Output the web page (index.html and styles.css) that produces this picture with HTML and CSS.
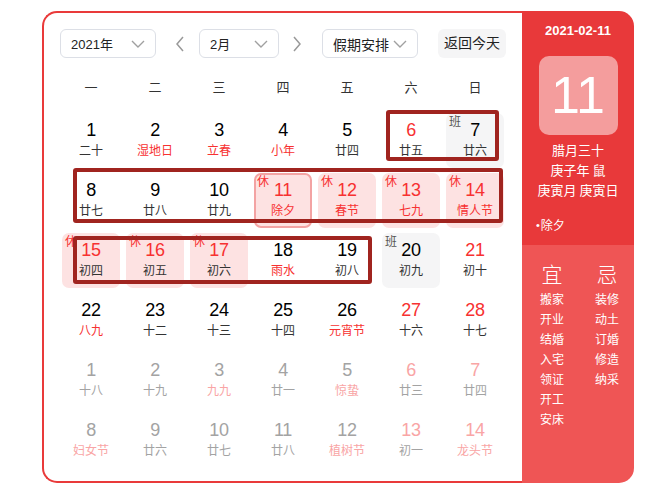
FILE: index.html
```html
<!DOCTYPE html>
<html lang="zh">
<head>
<meta charset="utf-8">
<link rel="stylesheet" href="styles.css">
</head>
<body>
<div class="cal">
  <div class="main">
    <div class="controls">
      <div class="select sel-year"><span>2021年</span><svg class="chev" viewBox="0 0 14 8"><path d="M1 1l6 6 6-6" fill="none" stroke="#a0a0a0" stroke-width="1.4"/></svg></div>
      <span class="arrow prev"><svg viewBox="0 0 8 16"><path d="M7 1L1 8l6 7" fill="none" stroke="#999" stroke-width="1.5"/></svg></span>
      <div class="select sel-month"><span>2月</span><svg class="chev" viewBox="0 0 14 8"><path d="M1 1l6 6 6-6" fill="none" stroke="#a0a0a0" stroke-width="1.4"/></svg></div>
      <span class="arrow next"><svg viewBox="0 0 8 16"><path d="M1 1l6 7-6 7" fill="none" stroke="#999" stroke-width="1.5"/></svg></span>
      <div class="select sel-hol"><span>假期安排</span><svg class="chev" viewBox="0 0 14 8"><path d="M1 1l6 6 6-6" fill="none" stroke="#a0a0a0" stroke-width="1.4"/></svg></div>
      <div class="today">返回今天</div>
    </div>
    <div class="weekdays">
      <span>一</span><span>二</span><span>三</span><span>四</span><span>五</span><span>六</span><span>日</span>
    </div>
    <div class="grid">
      <div class="cell"><span class="num">1</span><span class="lun">二十</span></div>
      <div class="cell"><span class="num">2</span><span class="lun red">湿地日</span></div>
      <div class="cell"><span class="num">3</span><span class="lun red">立春</span></div>
      <div class="cell"><span class="num">4</span><span class="lun red">小年</span></div>
      <div class="cell"><span class="num">5</span><span class="lun">廿四</span></div>
      <div class="cell"><span class="num red">6</span><span class="lun">廿五</span></div>
      <div class="cell work"><span class="tag">班</span><span class="num">7</span><span class="lun">廿六</span></div>

      <div class="cell"><span class="num">8</span><span class="lun">廿七</span></div>
      <div class="cell"><span class="num">9</span><span class="lun">廿八</span></div>
      <div class="cell"><span class="num">10</span><span class="lun">廿九</span></div>
      <div class="cell hol sel"><span class="tag">休</span><span class="num red">11</span><span class="lun red">除夕</span></div>
      <div class="cell hol"><span class="tag">休</span><span class="num red">12</span><span class="lun red">春节</span></div>
      <div class="cell hol"><span class="tag">休</span><span class="num red">13</span><span class="lun red">七九</span></div>
      <div class="cell hol"><span class="tag">休</span><span class="num red">14</span><span class="lun red">情人节</span></div>

      <div class="cell hol"><span class="tag">休</span><span class="num red">15</span><span class="lun">初四</span></div>
      <div class="cell hol"><span class="tag">休</span><span class="num red">16</span><span class="lun">初五</span></div>
      <div class="cell hol"><span class="tag">休</span><span class="num red">17</span><span class="lun">初六</span></div>
      <div class="cell"><span class="num">18</span><span class="lun red">雨水</span></div>
      <div class="cell"><span class="num">19</span><span class="lun">初八</span></div>
      <div class="cell work"><span class="tag">班</span><span class="num">20</span><span class="lun">初九</span></div>
      <div class="cell"><span class="num red">21</span><span class="lun">初十</span></div>

      <div class="cell"><span class="num">22</span><span class="lun red">八九</span></div>
      <div class="cell"><span class="num">23</span><span class="lun">十二</span></div>
      <div class="cell"><span class="num">24</span><span class="lun">十三</span></div>
      <div class="cell"><span class="num">25</span><span class="lun">十四</span></div>
      <div class="cell"><span class="num">26</span><span class="lun red">元宵节</span></div>
      <div class="cell"><span class="num red">27</span><span class="lun">十六</span></div>
      <div class="cell"><span class="num red">28</span><span class="lun">十七</span></div>

      <div class="cell other"><span class="num">1</span><span class="lun">十八</span></div>
      <div class="cell other"><span class="num">2</span><span class="lun">十九</span></div>
      <div class="cell other"><span class="num">3</span><span class="lun red">九九</span></div>
      <div class="cell other"><span class="num">4</span><span class="lun">廿一</span></div>
      <div class="cell other"><span class="num">5</span><span class="lun red">惊蛰</span></div>
      <div class="cell other"><span class="num red">6</span><span class="lun">廿三</span></div>
      <div class="cell other"><span class="num red">7</span><span class="lun">廿四</span></div>

      <div class="cell other"><span class="num">8</span><span class="lun red">妇女节</span></div>
      <div class="cell other"><span class="num">9</span><span class="lun">廿六</span></div>
      <div class="cell other"><span class="num">10</span><span class="lun">廿七</span></div>
      <div class="cell other"><span class="num">11</span><span class="lun">廿八</span></div>
      <div class="cell other"><span class="num">12</span><span class="lun red">植树节</span></div>
      <div class="cell other"><span class="num red">13</span><span class="lun">初一</span></div>
      <div class="cell other"><span class="num red">14</span><span class="lun red">龙头节</span></div>
    </div>
    <div class="mark mark-a"></div>
    <div class="mark mark-b"></div>
    <div class="mark mark-c"></div>
  </div>
  <div class="side">
    <div class="side-top">
      <div class="date">2021-02-11</div>
      <div class="big">11</div>
      <div class="info">腊月三十</div>
      <div class="info">庚子年 鼠</div>
      <div class="info">庚寅月 庚寅日</div>
      <div class="fest"><span class="dot">•</span>除夕</div>
    </div>
    <div class="side-bottom">
      <div class="col">
        <div class="head">宜</div>
        <div class="item">搬家</div>
        <div class="item">开业</div>
        <div class="item">结婚</div>
        <div class="item">入宅</div>
        <div class="item">领证</div>
        <div class="item">开工</div>
        <div class="item">安床</div>
      </div>
      <div class="col">
        <div class="head">忌</div>
        <div class="item">装修</div>
        <div class="item">动土</div>
        <div class="item">订婚</div>
        <div class="item">修造</div>
        <div class="item">纳采</div>
      </div>
    </div>
  </div>
</div>
</body>
</html>
```

FILE: styles.css
```css
* { box-sizing: border-box; }
html, body { margin: 0; padding: 0; background: #fff; }
body {
  font-family: "Liberation Sans", Arial, "Noto Sans CJK SC", sans-serif;
  color: #333;
}
.cal {
  display: flex;
  margin: 11px 0 0 42px;
  width: 592px;
  height: 472px;
}
.main {
  position: relative;
  width: 480px;
  height: 472px;
  border: 2px solid #e93a3a;
  border-right: none;
  border-radius: 15px 0 0 15px;
  padding: 16px 0 0 16px;
}
.controls {
  display: flex;
  align-items: center;
  height: 29px;
}
.select {
  display: flex;
  align-items: center;
  justify-content: space-between;
  height: 29px;
  border: 1px solid #dcdfe6;
  border-radius: 6px;
  padding: 0 10px 0 10px;
  font-size: 13px;
  color: #222;
}
.sel-year { width: 96px; }
.sel-month { width: 80px; }
.sel-hol { width: 96px; font-size: 14px; }
.chev { width: 14px; height: 8px; display: block; }
.arrow { display: flex; align-items: center; justify-content: center; width: 16px; height: 29px; }
.arrow svg { width: 8px; height: 16px; display: block; }
.prev { margin: 0 11px 0 16px; }
.next { margin: 0 17px 0 10px; }
.today {
  margin-left: 20px;
  width: 68px;
  height: 29px;
  line-height: 29px;
  text-align: center;
  background: #f5f5f6;
  border-radius: 6px;
  font-size: 14px;
  color: #222;
}
.weekdays {
  display: grid;
  grid-template-columns: repeat(7, 58px);
  column-gap: 6px;
  margin: 16px 0 0 2px;
  height: 28px;
  line-height: 28px;
  font-size: 13px;
  text-align: center;
  color: #333;
}
.grid {
  display: grid;
  grid-template-columns: repeat(7, 58px);
  grid-auto-rows: 55px;
  gap: 5px 6px;
  margin: 11px 0 0 2px;
}
.cell {
  position: relative;
  display: flex;
  flex-direction: column;
  align-items: center;
  padding-top: 7px;
  border-radius: 7px;
}
.num {
  font-size: 18px;
  line-height: 20px;
  color: #000;
  letter-spacing: -0.3px;
}
.lun {
  font-family: "Noto Sans CJK SC", sans-serif;
  font-size: 12px;
  line-height: 20px;
  color: #333;
}
.num.red, .lun.red { color: #f73131; }
.hol { background: #fde2e2; }
.work { background: #f5f5f6; }
.sel { border: 2px solid #f3a3a3; padding-top: 5px; }
.tag {
  position: absolute;
  left: 3px;
  top: 1px;
  font-family: "Noto Sans CJK SC", sans-serif;
  font-size: 12px;
  line-height: 14px;
  color: #f73131;
}
.sel .tag { left: 1px; top: -1px; }
.work .tag { color: #555; }
.other .num, .other .lun { color: #a3a3a3; }
.other .num.red, .other .lun.red { color: #f9a5a5; }
.mark {
  position: absolute;
  border: 4px solid #a0241f;
  border-radius: 3px;
}
.mark-a { left: 342px; top: 97px; width: 113px; height: 51px; }
.mark-b { left: 29px; top: 155px; width: 430px; height: 55px; }
.mark-c { left: 29px; top: 223px; width: 299px; height: 48px; }
.side {
  width: 112px;
  height: 472px;
  border-radius: 0 15px 15px 0;
  overflow: hidden;
  display: flex;
  flex-direction: column;
  color: #fff;
  font-family: "Noto Sans CJK SC", sans-serif;
}
.side-top {
  height: 234px;
  background: #e8393a;
  padding-top: 11px;
  display: flex;
  flex-direction: column;
  align-items: center;
}
.date {
  font-family: "Liberation Sans", Arial, sans-serif;
  font-weight: bold;
  font-size: 13px;
  line-height: 18px;
}
.big {
  margin-top: 16px;
  width: 79px;
  height: 79px;
  border-radius: 10px;
  background: #f49d9d;
  font-family: "Liberation Sans", Arial, sans-serif;
  font-size: 52px;
  line-height: 79px;
  text-align: center;
}
.big + .info { margin-top: 5px; }
.info { font-size: 13px; line-height: 20px; }
.fest {
  align-self: flex-start;
  margin: 15px 0 0 14px;
  font-size: 12px;
  line-height: 20px;
}
.dot { font-family: "Liberation Sans", Arial, sans-serif; font-size: 11px; margin-right: 1px; vertical-align: 1px; }
.side-bottom {
  flex: 1;
  background: #ef5555;
  display: flex;
  padding: 13px 0 0 18px;
  column-gap: 31px;
}
.col { width: 24px; display: flex; flex-direction: column; align-items: center; }
.head { font-size: 21px; line-height: 31px; font-weight: 300; }
.item { font-size: 12px; line-height: 20px; white-space: nowrap; }
```
